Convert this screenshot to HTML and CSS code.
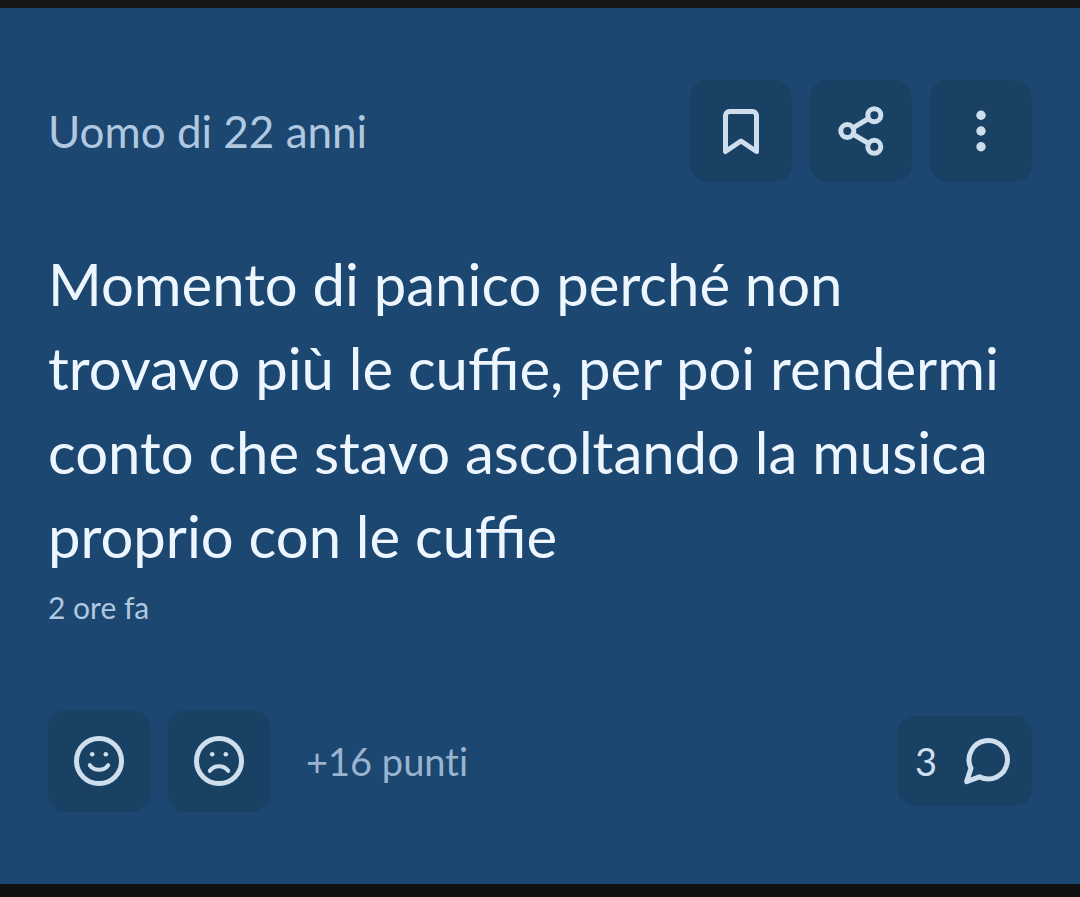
FILE: index.html
```
<!DOCTYPE html>
<html lang="it">

<head>
    <meta charset="UTF-8">
    <meta name="viewport" content="width=device-width, initial-scale=1.0">
    <title>Uomo di 22 anni</title>
    <link rel="stylesheet" href="styles.css">
</head>

<body>
    <article class="card">
        <header class="card-header">
            <span class="author">Uomo di 22 anni</span>
            <div class="actions">
                <button class="icon-button" type="button" aria-label="Salva">
                    <svg class="icon" viewBox="0 0 60 60">
                        <path d="M14.5 50.5V14.5a4 4 0 0 1 4-4h23a4 4 0 0 1 4 4v36L30 40z"/>
                    </svg>
                </button>
                <button class="icon-button" type="button" aria-label="Condividi">
                    <svg class="icon" viewBox="0 0 60 60">
                        <circle cx="16.3" cy="30" r="6.5"/>
                        <circle cx="43.3" cy="14.2" r="6.5"/>
                        <circle cx="43.3" cy="45.8" r="6.5"/>
                        <path d="M22 26.8l15.6-9.3M22 33.2l15.6 9.3"/>
                    </svg>
                </button>
                <button class="icon-button" type="button" aria-label="Altro">
                    <svg class="icon icon-dots" viewBox="0 0 60 60">
                        <circle cx="30" cy="14.2" r="4.7"/>
                        <circle cx="30" cy="30" r="4.7"/>
                        <circle cx="30" cy="45.8" r="4.7"/>
                    </svg>
                </button>
            </div>
        </header>

        <p class="message">Momento di panico perché non trovavo più le cuffie, per poi rendermi conto che stavo ascoltando la musica proprio con le cuffie</p>
        <time class="time">2 ore fa</time>

        <footer class="card-footer">
            <div class="actions">
                <button class="icon-button" type="button" aria-label="Mi piace">
                    <svg class="icon" viewBox="0 0 60 60">
                        <circle cx="30" cy="30" r="22.5"/>
                        <circle class="eye" cx="23.2" cy="23.2" r="2.3"/>
                        <circle class="eye" cx="36.8" cy="23.2" r="2.3"/>
                        <path class="mouth" d="M20.8 34.2c4.6 6.2 13.8 6.2 18.4 0"/>
                    </svg>
                </button>
                <button class="icon-button" type="button" aria-label="Non mi piace">
                    <svg class="icon" viewBox="0 0 60 60">
                        <circle cx="30" cy="30" r="22.5"/>
                        <circle class="eye" cx="23.2" cy="23.2" r="2.3"/>
                        <circle class="eye" cx="36.8" cy="23.2" r="2.3"/>
                        <path class="mouth" d="M20.8 39.8c4.6-6.2 13.8-6.2 18.4 0"/>
                    </svg>
                </button>
            </div>
            <span class="points">+16 punti</span>
            <button class="comments" type="button" aria-label="3 commenti">
                <span>3</span>
                <svg class="icon" viewBox="0 0 60 60">
                    <path d="M14 37.2A19.2 19.2 0 1 1 22.4 45.8L9.6 50.6z"/>
                </svg>
            </button>
        </footer>
    </article>
</body>

</html>
```

FILE: styles.css
```
body {
    margin: 0;
    background-color: #111111;
    font-family: Lato, "Open Sans", sans-serif;
}

.card {
    padding: 72px 48px;
    border-top: 8px solid #171717;
    background-color: #1b4770;
    color: #b0c8e0;
}

.card-header,
.card-footer {
    display: flex;
    align-items: center;
}

.card-header {
    justify-content: space-between;
}

.author {
    font-size: 44px;
}

.actions {
    display: flex;
    gap: 18px;
}

.icon-button,
.comments {
    display: flex;
    align-items: center;
    justify-content: center;
    border: none;
    border-radius: 18px;
    background-color: #184164;
    color: #cfdeed;
    cursor: pointer;
}

.icon-button {
    width: 102px;
    height: 102px;
    padding: 0;
}

.icon {
    width: 60px;
    height: 60px;
    fill: none;
    stroke: currentColor;
    stroke-width: 5;
    stroke-linecap: round;
    stroke-linejoin: round;
}

.icon-dots,
.eye {
    fill: currentColor;
    stroke: none;
}

.mouth {
    stroke-width: 4;
}

.message {
    margin: 60px 0 0;
    color: #edf6ff;
    font-size: 58px;
    line-height: 84px;
}

.time {
    display: block;
    font-size: 30px;
    line-height: 58px;
}

.card-footer {
    margin-top: 74px;
}

.points {
    margin-left: 36px;
    color: #9ab4d0;
    font-size: 38px;
    font-variant-ligatures: none;
}

.comments {
    gap: 20px;
    height: 90px;
    margin-left: auto;
    padding: 0 15px 0 18px;
    font-family: inherit;
    font-size: 38px;
}
```
